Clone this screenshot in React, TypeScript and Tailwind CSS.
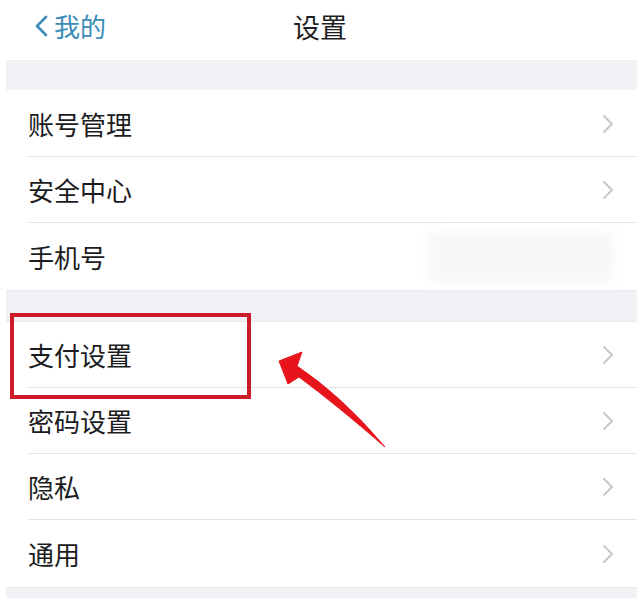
import React from 'react';

const font = { fontFamily: '"Noto Sans CJK SC", "Noto Sans", sans-serif' };

function Chevron() {
  return (
    <svg width="12" height="20" viewBox="0 0 12 20" fill="none" className="shrink-0">
      <path d="M2 2l8 8-8 8" stroke="#c7c7cc" strokeWidth="2" strokeLinecap="round" strokeLinejoin="round" />
    </svg>
  );
}

interface RowProps {
  label: string;
  h: string;
  divider?: boolean;
  blurred?: boolean;
}

function Row({ label, h, divider = true, blurred = false }: RowProps) {
  return (
    <div className={`relative flex items-center bg-white pl-[22px] pr-[23px] ${h}`}>
      <span className="text-[26px] leading-none text-[#1c1c1e]">{label}</span>
      <div className="ml-auto flex items-center">
        {blurred ? (
          <div className="h-[50px] w-[186px] rounded-lg bg-[#f7f7f9] blur-[6px]" />
        ) : (
          <Chevron />
        )}
      </div>
      {divider && <div className="absolute bottom-0 left-[22px] right-0 h-px bg-[#e3e3e6]" />}
    </div>
  );
}

export default function App() {
  return (
    <div className="relative h-[598px] w-[640px] overflow-hidden bg-white" style={font}>
      {/* Nav bar */}
      <div className="grid h-[60px] grid-cols-[1fr_auto_1fr] items-center pb-[8px]">
        <div className="flex items-center gap-[6px] pl-[35px] text-[#3b8cb8]">
          <svg width="13" height="22" viewBox="0 0 13 22" fill="none">
            <path d="M11 2L2 11l9 9" stroke="#3b8cb8" strokeWidth="2.6" strokeLinecap="round" strokeLinejoin="round" />
          </svg>
          <span className="text-[26px] leading-none">我的</span>
        </div>
        <span className="text-[27px] leading-none text-[#1f1f1f]">设置</span>
        <div />
      </div>

      <div className="ml-[6px] mr-[3px]">
        <div className="h-[30px] border-t border-[#ececf0] bg-[#f2f2f6]" />
        <Row label="账号管理" h="h-[67px]" />
        <Row label="安全中心" h="h-[66px]" />
        <Row label="手机号" h="h-[67px]" divider={false} blurred />
        <div className="h-[32px] border-y border-[#e8e8ec] bg-[#f2f2f6]" />
        <Row label="支付设置" h="h-[66px]" />
        <Row label="密码设置" h="h-[66px]" />
        <Row label="隐私" h="h-[66px]" />
        <Row label="通用" h="h-[67px]" divider={false} />
        <div className="h-[11px] border-t border-[#e8e8ec] bg-[#f2f2f6]" />
      </div>

      {/* Annotation: highlight box */}
      <div className="absolute left-[10px] top-[313px] h-[86px] w-[241px] border-4 border-[#cc1c2a]" />

      {/* Annotation: arrow */}
      <svg className="absolute left-0 top-0" width="640" height="598" viewBox="0 0 640 598">
        <path
          d="M279 361 L302 352 L297 366 Q342 396 385 447 Q338 406 299 377 L288 384 Z"
          fill="#e8141c"
          stroke="#e8141c"
          strokeWidth="1"
          strokeLinejoin="round"
        />
      </svg>
    </div>
  );
}
